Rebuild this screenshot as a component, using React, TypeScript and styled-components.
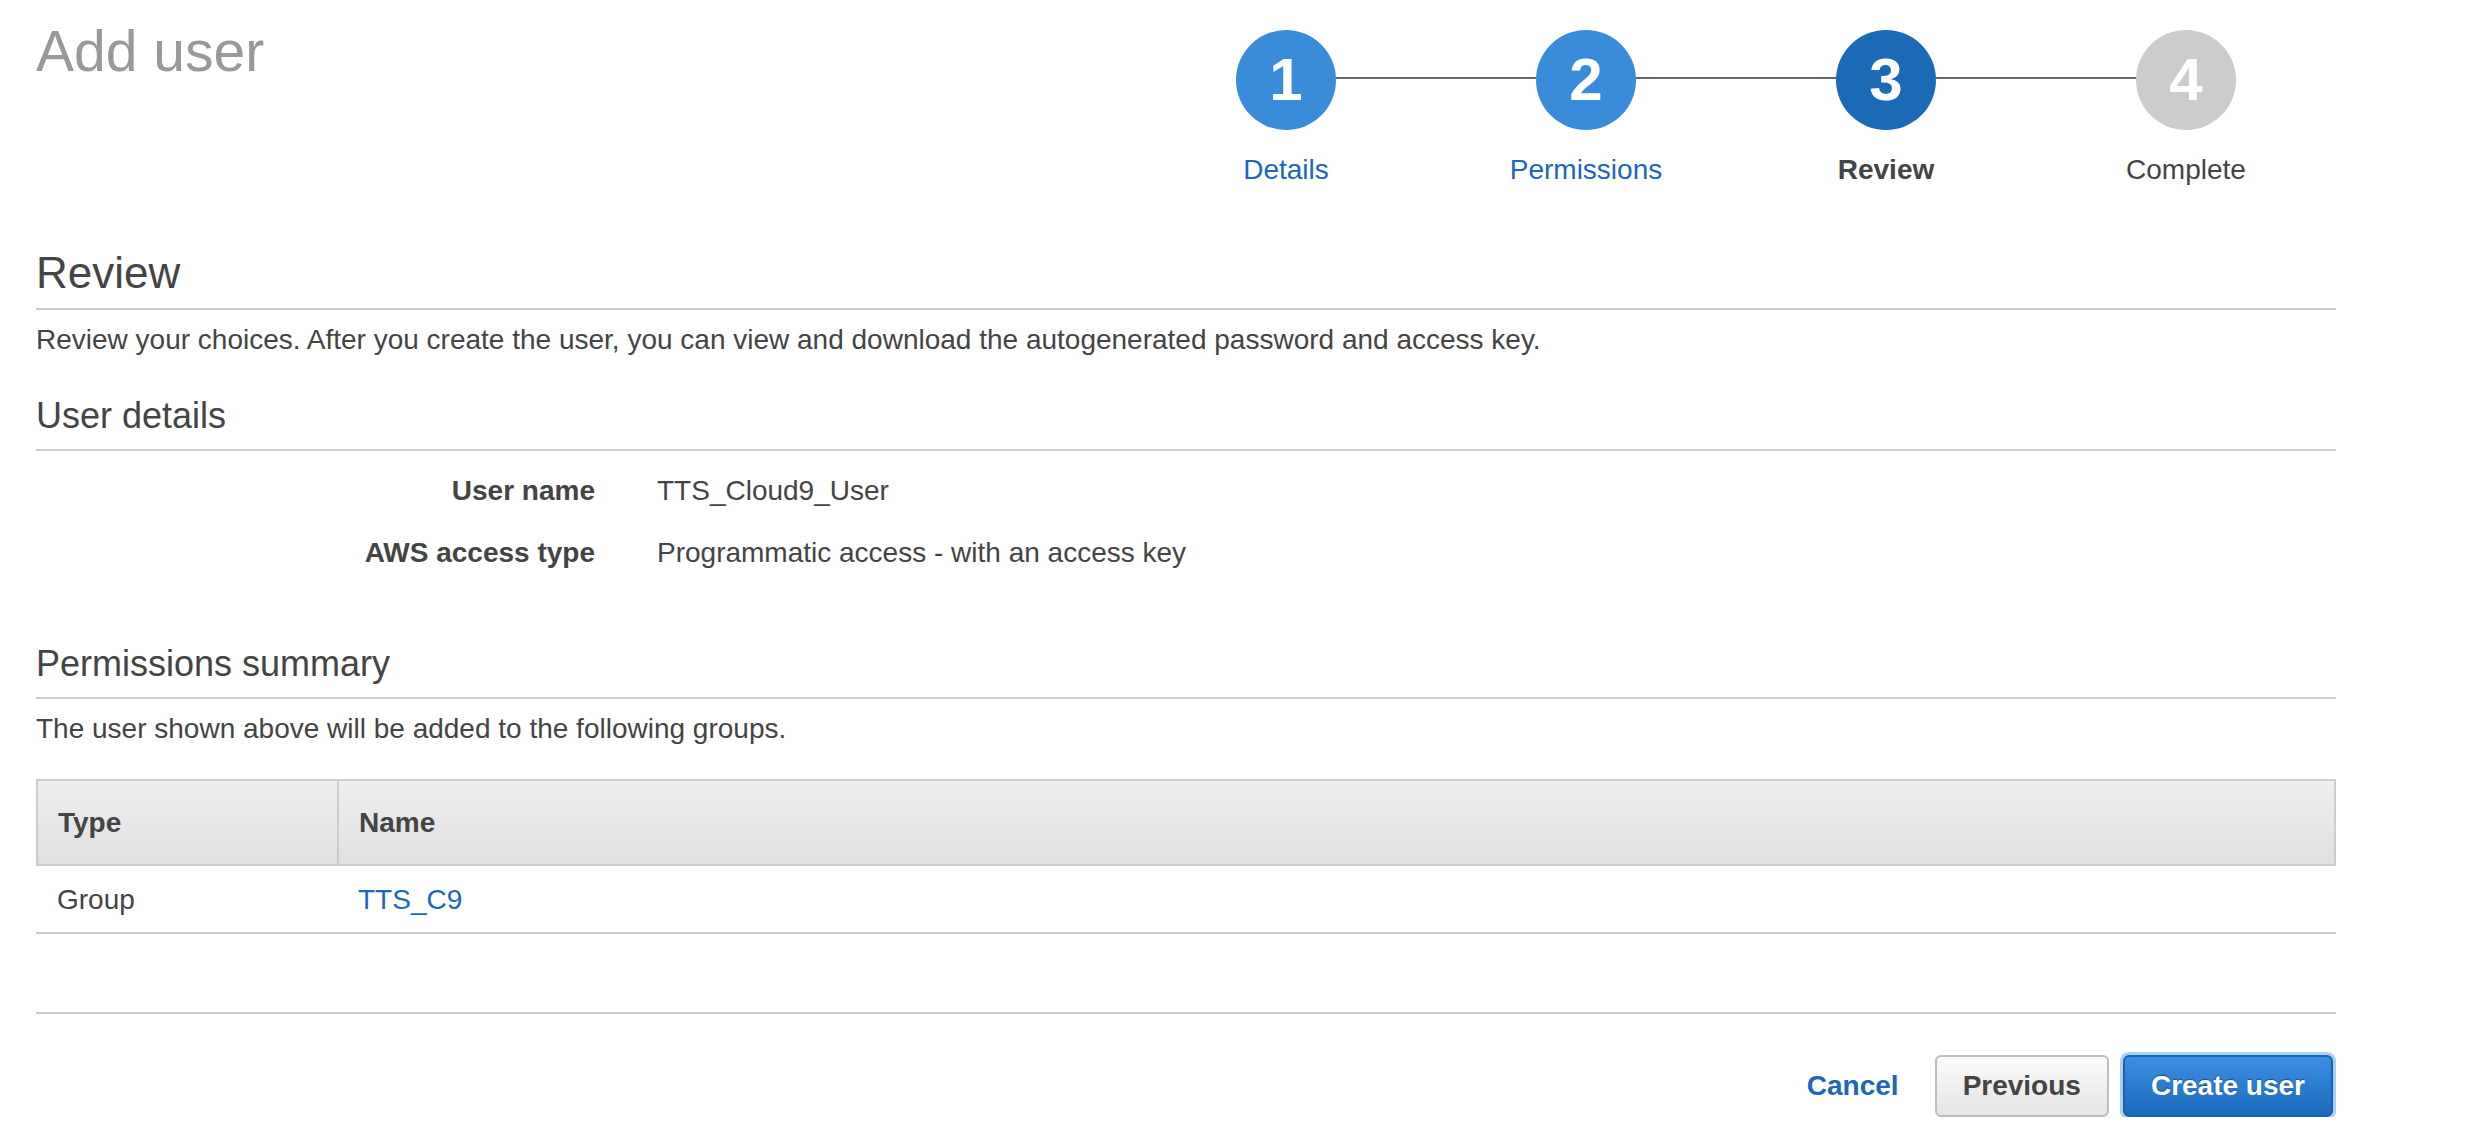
import React from 'react'
import styled, {createGlobalStyle} from 'styled-components'

const GlobalStyle = createGlobalStyle`
  * { box-sizing: border-box; }
  body {
    margin: 0;
    background: #fff;
    font-family: "Liberation Sans", Arial, Helvetica, sans-serif;
    color: #444;
  }
`

type StepState = 'done' | 'current' | 'todo'

const steps: { n: number, label: string, state: StepState }[] = [
  { n: 1, label: 'Details', state: 'done' },
  { n: 2, label: 'Permissions', state: 'done' },
  { n: 3, label: 'Review', state: 'current' },
  { n: 4, label: 'Complete', state: 'todo' },
]

const App = () => {
  return (
    <Page>
      <GlobalStyle />
      <Header>
        <Title>Add user</Title>
        <Stepper>
          <Circles>
            {steps.map((s, i) => (
              <React.Fragment key={s.n}>
                {i > 0 && <Connector />}
                <Circle $state={s.state}>{s.n}</Circle>
              </React.Fragment>
            ))}
          </Circles>
          <Labels>
            {steps.map((s) => (
              <StepLabel key={s.n} $state={s.state}>{s.label}</StepLabel>
            ))}
          </Labels>
        </Stepper>
      </Header>

      <SectionTitle>Review</SectionTitle>
      <Text>
        Review your choices. After you create the user, you can view and download the autogenerated password and access key.
      </Text>

      <SubTitle $top={44}>User details</SubTitle>
      <Details>
        <DetailLabel>User name</DetailLabel>
        <DetailValue>TTS_Cloud9_User</DetailValue>
        <DetailLabel>AWS access type</DetailLabel>
        <DetailValue>Programmatic access - with an access key</DetailValue>
      </Details>

      <SubTitle $top={79}>Permissions summary</SubTitle>
      <Text>The user shown above will be added to the following groups.</Text>

      <Table>
        <HeadRow>
          <HeadCell>Type</HeadCell>
          <HeadCell $divider>Name</HeadCell>
        </HeadRow>
        <BodyRow>
          <BodyCell>Group</BodyCell>
          <BodyCell $link>TTS_C9</BodyCell>
        </BodyRow>
      </Table>

      <Divider />

      <Actions>
        <LinkButton type="button">Cancel</LinkButton>
        <Button type="button">Previous</Button>
        <PrimaryButton type="button">Create user</PrimaryButton>
      </Actions>
    </Page>
  )
}

export default App

const Page = styled.div`
  width: 2300px;
  margin-left: 36px;
  padding-top: 23px;
`

const Header = styled.div`
  display: flex;
  justify-content: space-between;
  align-items: flex-start;
`

const Title = styled.h1`
  margin: 0;
  font-size: 57px;
  line-height: 1;
  font-weight: normal;
  color: #999;
`

const Stepper = styled.div`
  width: 1200px;
  margin-top: 7px;
`

const Circles = styled.div`
  display: flex;
  align-items: flex-start;
  padding: 0 100px;
`

const circleColors: Record<StepState, string> = {
  done: '#3b8bdb',
  current: '#1c69b6',
  todo: '#cccccc',
}

const Circle = styled.div<{ $state: StepState }>`
  flex: none;
  width: 100px;
  height: 100px;
  border-radius: 50%;
  background: ${(p) => circleColors[p.$state]};
  color: #fff;
  font-size: 60px;
  font-weight: bold;
  line-height: 100px;
  text-align: center;
`

const Connector = styled.div`
  flex: 1;
  height: 2px;
  margin-top: 47px;
  background: #666;
`

const Labels = styled.div`
  display: grid;
  grid-template-columns: repeat(4, 300px);
  margin-top: 26px;
`

const StepLabel = styled.div<{ $state: StepState }>`
  text-align: center;
  font-size: 28px;
  line-height: 1;
  color: ${(p) => (p.$state === 'done' ? '#1d66b9' : '#444')};
  font-weight: ${(p) => (p.$state === 'current' ? 'bold' : 'normal')};
`

const SectionTitle = styled.h2`
  margin: 67px 0 0;
  padding-bottom: 13px;
  border-bottom: 2px solid #ccc;
  font-size: 44px;
  line-height: 1;
  font-weight: normal;
  color: #444;
`

const SubTitle = styled.h3<{ $top: number }>`
  margin: ${(p) => p.$top}px 0 0;
  padding-bottom: 15px;
  border-bottom: 2px solid #ccc;
  font-size: 36px;
  line-height: 1;
  font-weight: normal;
  color: #444;
`

const Text = styled.p`
  margin: 16px 0 0;
  font-size: 28px;
  line-height: 1;
`

const Details = styled.div`
  display: grid;
  grid-template-columns: 559px 1fr;
  column-gap: 62px;
  row-gap: 34px;
  margin-top: 26px;
  font-size: 28px;
  line-height: 1;
`

const DetailLabel = styled.div`
  text-align: right;
  font-weight: bold;
`

const DetailValue = styled.div``

const Table = styled.div`
  margin-top: 36px;
  font-size: 28px;
  line-height: 1;
`

const HeadRow = styled.div`
  display: grid;
  grid-template-columns: 299px 1fr;
  border: 2px solid #ccc;
  background: linear-gradient(#eeeeee, #e0e0e0);
`

const HeadCell = styled.div<{ $divider?: boolean }>`
  padding: 28px 20px 27px;
  font-weight: bold;
  border-left: ${(p) => (p.$divider ? '2px solid #ccc' : 'none')};
`

const BodyRow = styled.div`
  display: grid;
  grid-template-columns: 301px 1fr;
  border-bottom: 2px solid #ccc;
`

const BodyCell = styled.div<{ $link?: boolean }>`
  padding: 20px 21px 18px;
  color: ${(p) => (p.$link ? '#1d66b9' : '#444')};
`

const Divider = styled.div`
  margin-top: 78px;
  height: 2px;
  background: #ccc;
`

const Actions = styled.div`
  display: flex;
  justify-content: flex-end;
  align-items: center;
  margin-top: 41px;
  padding-right: 3px;
`

const BaseButton = styled.button`
  height: 62px;
  padding: 0 26px;
  font-family: inherit;
  font-size: 28px;
  font-weight: bold;
  border-radius: 6px;
  cursor: pointer;
`

const LinkButton = styled(BaseButton)`
  border: none;
  background: none;
  padding: 0;
  margin-right: 36px;
  color: #1d66b9;
`

const Button = styled(BaseButton)`
  border: 2px solid #bdbdbd;
  background: linear-gradient(#fbfbfb, #e4e4e4);
  color: #444;
  margin-right: 14px;
`

const PrimaryButton = styled(BaseButton)`
  border: 2px solid #1a62b0;
  background: linear-gradient(#3a8fe4, #1d6abb);
  color: #fff;
  text-shadow: 0 -1px 1px rgba(0, 0, 0, 0.4);
  box-shadow: 0 0 0 3px #a9cff5;
`
